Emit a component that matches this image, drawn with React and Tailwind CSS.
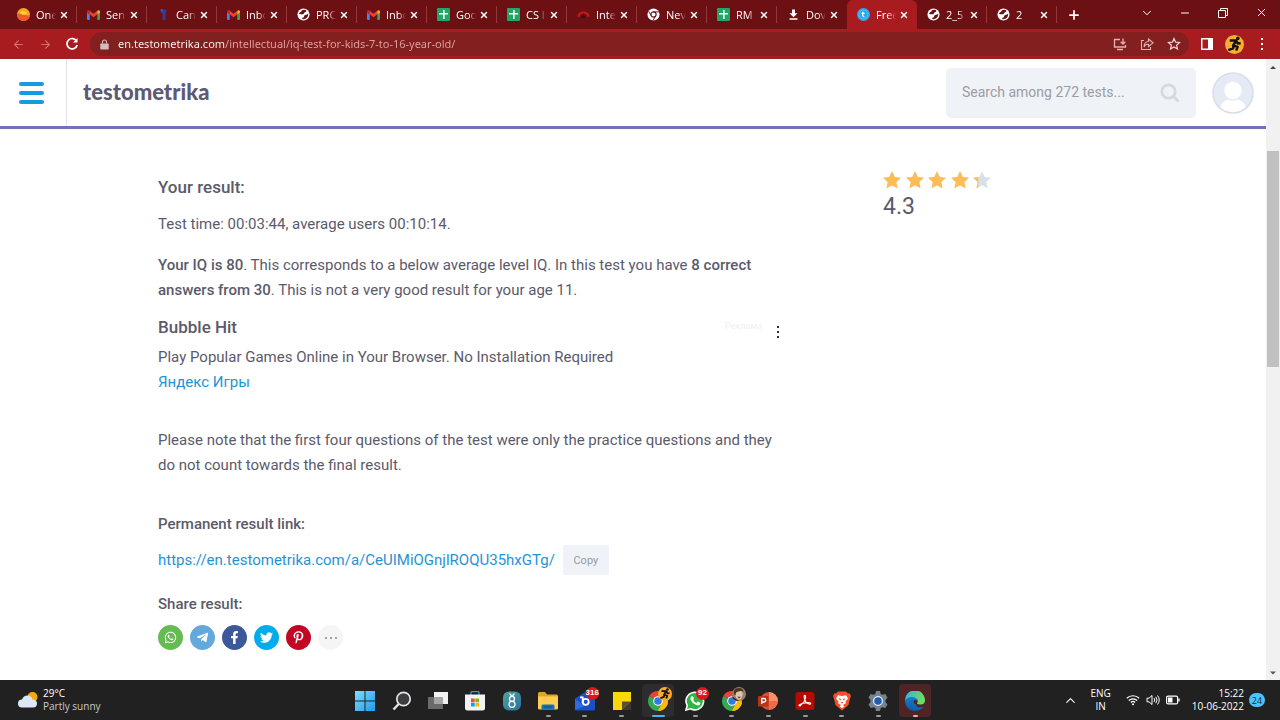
import { FaWhatsapp, FaTelegramPlane, FaFacebookF, FaTwitter, FaPinterestP } from "react-icons/fa";
import { X, Plus, ArrowLeft, ArrowRight, ChevronDown, ChevronUp, Minus } from "lucide-react";

/* ---------- tab icons ---------- */

function OneIcon() {
  return (
    <svg viewBox="0 0 14 14" className="size-[13px]">
      <circle cx="7" cy="7" r="7" fill="#f5a623" />
      <path d="M0 7a7 7 0 0 0 14 0c-2 2-4 1-6 0S2 5 0 7z" fill="#f0592a" />
      <path d="M3 5c2-2 5-2 8 0-2 3-6 3-8 0z" fill="#ffd23f" />
    </svg>
  );
}

function GmailIcon() {
  return (
    <svg viewBox="0 0 24 18" className="h-[10px] w-[13px]">
      <path d="M0 3v13.500q0 1.500 1.500 1.500H5V7z" fill="#4285f4" />
      <path d="M24 3v13.500q0 1.500-1.500 1.500H19V7z" fill="#34a853" />
      <path d="M0 3Q0 0 2.500 0 3.600 0 5 1.300L12 6.500 19 1.300V7.500L12 13 5 7.500 0 4z" fill="#ea4335" />
      <path d="M19 1.300Q20.500 0 21.500 0 24 0 24 3v1.500l-5 3.500z" fill="#fbbc04" />
      <path d="M0 3Q0 0 2.500 0 3.600 0 5 1.300V8L0 4.500z" fill="#c5221f" />
    </svg>
  );
}

function CanIcon() {
  return (
    <svg viewBox="0 0 14 14" className="size-[13px]">
      <path d="M4 2h6v2.500H9V13H6V5H4z" fill="#2e3f9e" />
      <circle cx="5" cy="2.200" r="1.200" fill="#3f63d8" />
    </svg>
  );
}

function GlobeIcon() {
  return (
    <svg viewBox="0 0 14 14" className="size-[13px]">
      <circle cx="7" cy="7" r="6.500" fill="#fff" />
      <path d="M2 6.500c2 0 3 .5 4.500.2C8 6.300 7 4.500 9 4.200c1 0 1.300-.8.800-1.800C7 1 4.500 2.500 4.800 3.500 4.500 4.500 3 4 2 6.500zM12 6c-1.500 1.700-3 1.500-4 2s.5 2-1.500 2.300c-1.200.2-1 1.200-.5 1.700C9.500 12.500 12.500 10 12 6z" fill="#6c1013" />
    </svg>
  );
}

function SheetsIcon() {
  return (
    <svg viewBox="0 0 13 13" className="size-[13px]">
      <rect width="13" height="13" rx="1" fill="#23a566" />
      <path d="M6 2h1.600v3H11v1.500H7.600V11H6V6.500H2V5h4z" fill="#fff" />
    </svg>
  );
}

function GaugeIcon() {
  return (
    <svg viewBox="0 0 14 14" className="size-[13px]">
      <path d="M1.500 9.500a5.600 5.600 0 0 1 11 0" fill="none" stroke="#c4161c" strokeWidth="2.600" />
      <path d="M5 10.500l2-5 2 5z" fill="#3a0709" />
    </svg>
  );
}

function ChromeMonoIcon() {
  return (
    <svg viewBox="0 0 14 14" className="size-[13px]">
      <circle cx="7" cy="7" r="6.500" fill="#fff" />
      <circle cx="7" cy="7" r="2.800" fill="#fff" stroke="#6c1013" strokeWidth="1.200" />
      <path d="M7 4.200h5.800M4.600 8.400L1.700 3.400M9.400 8.400L6.500 13.300" stroke="#6c1013" strokeWidth="1" />
    </svg>
  );
}

function DownloadIcon() {
  return (
    <svg viewBox="0 0 13 13" className="size-[13px]">
      <path d="M5 1.500h3v3.800h2.500L6.500 9.300 2.500 5.300H5zM2.500 10.300h8v1.500h-8z" fill="#fff" />
    </svg>
  );
}

function TestometrikaIcon() {
  return (
    <svg viewBox="0 0 14 14" className="size-[13px]">
      <circle cx="7" cy="7" r="7" fill="#2aa7ee" />
      <circle cx="7" cy="7" r="4.800" fill="none" stroke="#a9dcfa" strokeWidth=".6" strokeDasharray="2 1" />
      <path d="M6.200 4v4.200q0 1.300 1.800 1.300M5 5.800h3.200" fill="none" stroke="#fff" strokeWidth="1.300" />
    </svg>
  );
}

const tabs = [
  { icon: OneIcon, title: "One" },
  { icon: GmailIcon, title: "Sen" },
  { icon: CanIcon, title: "Can" },
  { icon: GmailIcon, title: "Inbo" },
  { icon: GlobeIcon, title: "PRC" },
  { icon: GmailIcon, title: "Inbo" },
  { icon: SheetsIcon, title: "Goo" },
  { icon: SheetsIcon, title: "CS I" },
  { icon: GaugeIcon, title: "Inte" },
  { icon: ChromeMonoIcon, title: "Nev" },
  { icon: SheetsIcon, title: "RM" },
  { icon: DownloadIcon, title: "Dov" },
  { icon: TestometrikaIcon, title: "Free", active: true },
  { icon: GlobeIcon, title: "2_5" },
  { icon: GlobeIcon, title: "2" },
];

function Tab({ icon: Icon, title, active, divider }) {
  return (
    <li
      className={
        "flex w-[70px] min-w-0 items-center border-r pl-[10px] " +
        (active ? "rounded-t-md bg-[#a81c1f] " : "") +
        (divider ? "my-[6px] border-[#94393b]" : active ? "border-transparent" : "my-[6px] border-transparent")
      }
    >
      <Icon />
      <button
        type="button"
        className="ml-[6px] w-5 overflow-hidden text-left text-[11px] leading-4 whitespace-nowrap text-white [mask-image:linear-gradient(90deg,#000_60%,transparent)]"
      >
        {title}
      </button>
      <button type="button" aria-label="Close tab" className="ml-[2px] flex size-3 items-center justify-center text-white">
        <X className="size-[10px]" strokeWidth={3.5} />
      </button>
    </li>
  );
}

function TabStrip() {
  return (
    <div className="flex h-[29px] bg-[#6c1013] pl-[7px] font-['Open_Sans','Noto_Sans',sans-serif] text-white">
      <ul className="flex min-w-0">
        {tabs.map((tab, i) => (
          <Tab key={i} {...tab} divider={!tab.active && !(tabs[i + 1] && tabs[i + 1].active)} />
        ))}
      </ul>
      <button type="button" aria-label="New tab" className="flex w-[34px] items-center justify-center">
        <Plus className="size-[14px]" strokeWidth={3} />
      </button>
      <div className="ml-auto flex items-center pb-1">
        <button type="button" aria-label="Search tabs" className="flex w-[38px] justify-center">
          <ChevronDown className="size-[14px]" strokeWidth={1.7} />
        </button>
        <button type="button" aria-label="Minimize" className="flex w-[38px] justify-center">
          <Minus className="size-3" strokeWidth={2} />
        </button>
        <button type="button" aria-label="Restore" className="flex w-[38px] justify-center">
          <svg viewBox="0 0 10 10" className="size-[10px]" fill="none" stroke="#fff">
            <path d="M.5 2.500h7v7h-7zM2.500 2.500V.5h7v7h-2" />
          </svg>
        </button>
        <button type="button" aria-label="Close" className="flex w-[38px] justify-center">
          <X className="size-[13px]" strokeWidth={1.8} />
        </button>
      </div>
    </div>
  );
}

function RunnerBadge({ className }) {
  return (
    <svg viewBox="0 0 20 20" className={className}>
      <circle cx="10" cy="10" r="10" fill="#fbae2c" />
      <circle cx="13.500" cy="3.600" r="1.900" fill="#111" />
      <path d="M5 5.800h7L8.500 11l4.800 1.500-1.500 4M9 10.800L8.500 14l-5 2M12 6.500l1.500 2.500 3-.3" fill="none" stroke="#111" strokeWidth="2.600" strokeLinejoin="round" />
    </svg>
  );
}

function Toolbar() {
  return (
    <div className="flex h-[30px] items-center bg-[#a81c1f] pr-4 pl-3">
      <button type="button" aria-label="Back" className="text-[#d3706f]">
        <ArrowLeft className="size-[13px]" strokeWidth={2} />
      </button>
      <button type="button" aria-label="Forward" className="ml-[14px] text-[#d3706f]">
        <ArrowRight className="size-[13px]" strokeWidth={2} />
      </button>
      <button type="button" aria-label="Reload" className="ml-[13px]">
        <svg viewBox="0 0 14 14" className="size-[14px]" fill="none" stroke="#fff" strokeWidth="1.700">
          <path d="M11.700 4.200A5.200 5.200 0 1 0 12.200 8" />
          <path d="M12.500 1v4.500H8z" fill="#fff" stroke="none" />
        </svg>
      </button>
      <label className="ml-[11px] flex h-6 flex-1 items-center rounded-full bg-[#831f1f] pr-[8px] pl-[10px]">
        <svg viewBox="0 0 10 12" className="h-[11px] w-[9px]">
          <path d="M1 5h8q.7 0 .7.700v5q0 .8-.7.800H1q-.7 0-.7-.8v-5Q.3 5 1 5z" fill="#d5bcbc" />
          <path d="M2.800 5V3.200a2.200 2.200 0 0 1 4.400 0V5" fill="none" stroke="#d5bcbc" strokeWidth="1.200" />
        </svg>
        <input
          type="text"
          aria-label="Address"
          defaultValue="en.testometrika.com/intellectual/iq-test-for-kids-7-to-16-year-old/"
          className="ml-[9px] min-w-0 flex-1 bg-[linear-gradient(90deg,#ffffff_107px,#e0a3a3_107px)] bg-clip-text font-['Noto_Sans',sans-serif] text-[11px] leading-4 text-transparent outline-none"
        />
        <span className="flex items-center gap-[13px]">
          <button type="button" aria-label="Install">
            <svg viewBox="0 0 14 14" className="size-[14px]" fill="none" stroke="#dfb3b3" strokeWidth="1.300">
              <path d="M7 2.500H1.500v7.500h11V8M4 12.500h6M10 1.500v5M7.700 4.700L10 7l2.300-2.300" />
            </svg>
          </button>
          <button type="button" aria-label="Share">
            <svg viewBox="0 0 14 14" className="size-[14px]" fill="none" stroke="#dfb3b3" strokeWidth="1.100">
              <path d="M4 3.500H1.500v9h9V10M8.500 2l4.500 3.800L8.500 9.500V7.300Q5.500 7 4 10 4.300 5 8.500 4.300z" />
            </svg>
          </button>
          <button type="button" aria-label="Bookmark">
            <svg viewBox="0 0 14 14" className="size-[14px]" fill="none" stroke="#f0d5d5" strokeWidth="1.200">
              <path d="M7 1.500l1.600 3.700 4 .3-3 2.700.9 3.900L7 10l-3.500 2.100.9-3.900-3-2.700 4-.3z" />
            </svg>
          </button>
        </span>
      </label>
      <button type="button" aria-label="Side panel" className="ml-[12px]">
        <svg viewBox="0 0 12 12" className="size-3">
          <path d="M0 0h12v12H0zM1.500 1.500v9H7v-9z" fill="#fff" fillRule="evenodd" />
        </svg>
      </button>
      <button type="button" aria-label="Profile" className="ml-[12px]">
        <RunnerBadge className="size-[19px]" />
      </button>
      <button type="button" aria-label="Menu" className="ml-4 flex flex-col gap-[3px] px-[1px]">
        <i className="size-[2px] bg-white" />
        <i className="size-[2px] bg-white" />
        <i className="size-[2px] bg-white" />
      </button>
    </div>
  );
}

/* ---------- site ---------- */

function SiteHeader() {
  return (
    <header className="flex h-[70px] items-center border-b-[3px] border-[#7272b3] pr-3">
      <div className="flex h-full w-[67px] items-center justify-center border-r border-[#e4e4ec] pr-1">
        <button type="button" aria-label="Menu" className="flex w-[25px] flex-col gap-[5px]">
          <i className="h-1 rounded-full bg-[#179bdc]" />
          <i className="h-1 rounded-full bg-[#179bdc]" />
          <i className="h-1 rounded-full bg-[#179bdc]" />
        </button>
      </div>
      <a href="#home" className="ml-4 pb-[2px] font-['Lato',sans-serif] text-[22px] leading-6 font-black text-[#5d5b73]">
        testometrika
      </a>
      <label className="ml-auto flex h-[50px] w-[250px] items-center rounded-[5px] bg-[#eff3f7] px-4">
        <input
          type="search"
          aria-label="Search tests"
          placeholder="Search among 272 tests..."
          className="min-w-0 flex-1 bg-transparent text-[14px] text-[#5d5b6b] outline-none placeholder:text-[#9b9ca5]"
        />
        <svg viewBox="0 0 20 20" className="size-5" fill="none" stroke="#d5dade">
          <circle cx="8.500" cy="8.500" r="6.700" strokeWidth="2.800" />
          <path d="M13.500 13.500l5 5" strokeWidth="3" />
        </svg>
      </label>
      <button type="button" aria-label="Account" className="ml-4">
        <svg viewBox="0 0 42 42" className="size-[42px]">
          <circle cx="21" cy="21" r="20" fill="#e6eaf4" />
          <path d="M8 36.500Q9.500 27 21 27t13 9.500A20 20 0 0 1 8 36.500z" fill="#fff" />
          <circle cx="21" cy="18.500" r="9.500" fill="#fff" stroke="#e6eaf4" strokeWidth="1.500" />
          <circle cx="21" cy="21" r="20" fill="none" stroke="#d9deea" strokeWidth="1.600" />
        </svg>
      </button>
    </header>
  );
}

const starPath = "M9 .3l2.700 5.700 6.200.8-4.600 4.200 1.200 6.200L9 14.200l-5.500 3L4.700 11 .1 6.800 6.300 6z";

function Rating({ value }) {
  return (
    <section aria-label="Rating" className="w-[225px] pt-[42px]">
      <div className="flex w-[108px] justify-between">
        {[0, 1, 2, 3, 4].map((i) => (
          <svg key={i} viewBox="0 0 18 18" className="size-[18px]">
            <clipPath id={"star" + i}>
              <rect width={18 * Math.min(1, Math.max(0, value - i))} height="18" />
            </clipPath>
            <path d={starPath} fill="#d9e1e8" />
            <path d={starPath} fill="#fdbc54" clipPath={"url(#star" + i + ")"} />
          </svg>
        ))}
      </div>
      <p className="mt-1 text-[23px] leading-7">{value}</p>
    </section>
  );
}

const shares = [
  { label: "WhatsApp", icon: FaWhatsapp, color: "bg-[#65bc54]" },
  { label: "Telegram", icon: FaTelegramPlane, color: "bg-[#64a9dc]" },
  { label: "Facebook", icon: FaFacebookF, color: "bg-[#3b5998]" },
  { label: "Twitter", icon: FaTwitter, color: "bg-[#00aced]" },
  { label: "Pinterest", icon: FaPinterestP, color: "bg-[#c20724]" },
];

function Result() {
  return (
    <article className="w-[625px] pt-[46px]">
      <h2 className="text-[17px] font-medium">Your result:</h2>
      <p className="mt-3">Test time: 00:03:44, average users 00:10:14.</p>
      <p className="mt-4">
        <b className="font-medium">Your IQ is 80</b>. This corresponds to a below average level IQ. In this test you have{" "}
        <b className="font-medium">8 correct answers from 30</b>. This is not a very good result for your age 11.
      </p>
      <div className="mt-3">
        <div className="flex justify-between pr-[3px]">
          <h3 className="text-[17px] font-medium">Bubble Hit</h3>
          <div className="flex items-center gap-[14px]">
            <span className="pb-1 text-[9px] leading-3 text-[#efeff2]">Реклама</span>
            <button type="button" aria-label="Ad options" className="mt-2 flex flex-col gap-[3px] px-[1px]">
              <i className="size-[2px] bg-[#333]" />
              <i className="size-[2px] bg-[#333]" />
              <i className="size-[2px] bg-[#333]" />
            </button>
          </div>
        </div>
        <p className="mt-[5px]">Play Popular Games Online in Your Browser. No Installation Required</p>
        <a href="#games" className="text-[#1e94d6]">
          Яндекс Игры
        </a>
      </div>
      <p className="mt-[33px]">
        Please note that the first four questions of the test were only the practice questions and they do not count
        towards the final result.
      </p>
      <h3 className="mt-[34px] font-medium">Permanent result link:</h3>
      <div className="mt-2 flex items-center">
        <a href="#result" className="text-[#1e94d6]">
          https://en.testometrika.com/a/CeUIMiOGnjlROQU35hxGTg/
        </a>
        <button type="button" className="ml-2 h-[30px] w-[46px] rounded-[2px] bg-[#eff3f7] text-[11px] text-[#9799a5]">
          Copy
        </button>
      </div>
      <h3 className="mt-[17px] font-medium">Share result:</h3>
      <div className="mt-2 flex gap-[7px]">
        {shares.map(({ label, icon: Icon, color }) => (
          <button
            key={label}
            type="button"
            aria-label={label}
            className={"flex size-[25px] items-center justify-center rounded-full text-white " + color}
          >
            <Icon className="size-[13px]" />
          </button>
        ))}
        <button type="button" aria-label="More" className="flex size-[25px] items-center justify-center gap-[3px] rounded-full bg-[#f5f5f5]">
          <i className="size-[2px] rounded-full bg-[#888]" />
          <i className="size-[2px] rounded-full bg-[#888]" />
          <i className="size-[2px] rounded-full bg-[#888]" />
        </button>
      </div>
    </article>
  );
}

function Scrollbar() {
  return (
    <div aria-hidden="true" className="flex w-[14px] flex-col items-center bg-[#f1f1f1]">
      <svg viewBox="0 0 14 14" className="size-[14px]">
        <path d="M4 10l3-3 3 3z" fill="#444" />
      </svg>
      <div className="mt-[78px] h-[216px] w-3 bg-[#c1c1c1]" />
      <svg viewBox="0 0 14 14" className="mt-auto size-[14px]">
        <path d="M4 5.500h6l-3 3z" fill="#555" />
      </svg>
    </div>
  );
}

/* ---------- taskbar ---------- */

function WindowsIcon() {
  return (
    <svg viewBox="0 0 20 20" className="size-5">
      <linearGradient id="win" x2="1" y2="1">
        <stop stopColor="#7fdcff" />
        <stop offset="1" stopColor="#1d9bea" />
      </linearGradient>
      <path d="M0 0h9.500v9.500H0zM10.500 0H20v9.500h-9.500zM0 10.500h9.500V20H0zM10.500 10.500H20V20h-9.500z" fill="url(#win)" />
    </svg>
  );
}

function SearchIcon() {
  return (
    <svg viewBox="0 0 20 20" className="size-5" fill="none" stroke="#e6e6e6">
      <circle cx="11.500" cy="8" r="6.700" strokeWidth="1.700" fill="#3b3f42" />
      <path d="M6.700 13L1.500 18.500" strokeWidth="2.400" />
    </svg>
  );
}

function TaskViewIcon() {
  return (
    <svg viewBox="0 0 20 20" className="size-5">
      <path d="M6 1h14v12H6z" fill="#f2f2f2" />
      <path d="M0 6h15v12H0z" fill="#6a6a6a" />
      <path d="M6 6h9v7H6z" fill="#a5a5a5" />
    </svg>
  );
}

function StoreIcon() {
  return (
    <svg viewBox="0 0 20 20" className="size-5">
      <path d="M6 4V1.500q0-.8.800-.8h6.400q.8 0 .8.800V4" fill="none" stroke="#2f9be0" strokeWidth="1.300" />
      <path d="M0 3.500h20V17q0 2.500-2.500 2.500h-15Q0 19.500 0 17z" fill="#f3f3f3" />
      <path d="M6 7.500h3.700v3.700H6z" fill="#f25022" />
      <path d="M10.300 7.500H14v3.700h-3.700z" fill="#7fba00" />
      <path d="M6 11.800h3.700v3.700H6z" fill="#00a4ef" />
      <path d="M10.300 11.800H14v3.700h-3.700z" fill="#ffb900" />
    </svg>
  );
}

function EightIcon() {
  return (
    <svg viewBox="0 0 20 20" className="size-5">
      <linearGradient id="eight" x2="1" y2="1">
        <stop stopColor="#4fa39b" />
        <stop offset="1" stopColor="#2b6f9e" />
      </linearGradient>
      <rect x="1" y=".5" width="18" height="19" rx="6" fill="url(#eight)" />
      <path d="M7.500 2.500L10 5.300l2.500-2.800" fill="none" stroke="#fff" strokeWidth="1.200" />
      <circle cx="10" cy="7.800" r="2.500" fill="none" stroke="#fff" strokeWidth="1.300" />
      <circle cx="10" cy="13.300" r="3" fill="none" stroke="#fff" strokeWidth="1.300" />
    </svg>
  );
}

function FolderIcon() {
  return (
    <svg viewBox="0 0 20 20" className="size-5">
      <path d="M0 2.500Q0 1 1.500 1H7l2 2.500h9.500q1.500 0 1.500 1.500v5H0z" fill="#e5a523" />
      <path d="M0 5.500h20V17q0 1.500-1.500 1.500h-17Q0 18.500 0 17z" fill="#fccf53" />
      <path d="M3.500 18.500V15q0-1.500 1.500-1.500h10q1.500 0 1.500 1.500v3.500z" fill="#1571b8" />
      <path d="M6 15.500h8v1H6z" fill="#0d4f86" />
    </svg>
  );
}

function MailIcon() {
  return (
    <svg viewBox="0 0 20 20" className="size-5">
      <path d="M0 7.500L10 1l10 6.500V18q0 1.500-1.500 1.500h-17Q0 19.500 0 18z" fill="#1b4fc4" />
      <path d="M0 8l10 7L0 19z" fill="#2d6be0" />
      <circle cx="10.700" cy="10.800" r="3" fill="none" stroke="#fff" strokeWidth="1.800" />
      <path d="M5 6.300h2.700V12" fill="none" stroke="#fff" strokeWidth="1.700" />
    </svg>
  );
}

function NotesIcon() {
  return (
    <svg viewBox="0 0 20 20" className="size-5">
      <path d="M1 1h18v9.500L10 19H1z" fill="#fcd80a" />
      <path d="M19 10.500L10 19v-8.500z" fill="#5c5230" />
      <path d="M19 10.500V19h-9z" fill="#3c3a35" />
    </svg>
  );
}

function ChromeIcon() {
  return (
    <svg viewBox="0 0 20 20" className="size-5">
      <path d="M10 10L1.340 5A10 10 0 0 1 18.660 5z" fill="#ea4335" />
      <path d="M10 10L18.660 5A10 10 0 0 1 10 20z" fill="#fbbc05" />
      <path d="M10 10V20A10 10 0 0 1 1.340 5z" fill="#34a853" />
      <path d="M10 5.200h8.700L14.200 12.400z" fill="#fbbc05" />
      <path d="M5.840 12.400L10 20l4.160-7.600z" fill="#34a853" />
      <path d="M14.160 12.400L10 20q8-1 10-8z" fill="#fbbc05" />
      <circle cx="10" cy="10" r="4.800" fill="#fff" />
      <circle cx="10" cy="10" r="3.800" fill="#3478e8" />
    </svg>
  );
}

function FaceBadge({ className }) {
  return (
    <svg viewBox="0 0 12 12" className={className}>
      <circle cx="6" cy="6" r="6" fill="#9b8267" />
      <path d="M3 3.500Q6 1 9 4v3q-1 4-3 4-3-1-3-4z" fill="#e0c6a4" />
      <path d="M1.500 6Q1 1 5 1q4-1 5 3Q7 3 5 4 3 4 3 7zM4.500 8.300h3.200L6 9.800z" fill="#4a3728" />
      <path d="M0 8l3 2 3 2Q1 12 0 8z" fill="#2c221b" />
    </svg>
  );
}

function WhatsAppIcon() {
  return (
    <svg viewBox="0 0 20 20" className="size-5">
      <path d="M1 19l1.200-4.500A8.800 8.800 0 1 1 5.600 17.800z" fill="#2bb741" stroke="#fff" strokeWidth="1.600" />
      <path d="M6.400 5.500q.9-1 1.700.2l.8 1.800q.1.500-.8 1.500 1.200 2.100 3.300 2.900l1-1.100q.5-.4 1 0l1.800 1q.6.500-.2 1.600-1.400 1.600-3.800.7-4-1.500-5.600-5.300-.4-2.200.8-3.300z" fill="#fff" />
    </svg>
  );
}

function PowerPointIcon() {
  return (
    <svg viewBox="0 0 20 20" className="size-5">
      <circle cx="11" cy="10" r="9" fill="#d35230" />
      <path d="M11 1a9 9 0 0 1 9 9h-9z" fill="#ff8f6b" />
      <path d="M11 10h9a9 9 0 0 1-9 9z" fill="#ed6c47" />
      <rect y="5" width="10.500" height="10.500" rx="1" fill="#b7331a" />
      <path d="M3.800 13V7.500H6a1.700 1.700 0 0 1 0 3.500H4" fill="none" stroke="#fff" strokeWidth="1.300" />
    </svg>
  );
}

function AcrobatIcon() {
  return (
    <svg viewBox="0 0 20 20" className="size-5">
      <rect x=".5" y="1" width="19" height="18" rx="2.500" fill="#b30b00" />
      <path d="M9.300 4.500q1.700-.5 1.200 2.500-.8 4-5.500 8-1.700 0-.5-1.300 4-2.500 10.500-2 1.500 1 0 1.600-4-.5-5.500-5.300-.6-2-.2-3.500z" fill="none" stroke="#fff" strokeWidth="1.100" />
    </svg>
  );
}

function BraveIcon() {
  return (
    <svg viewBox="0 0 20 20" className="size-5">
      <path d="M6 .5h8l2 2 1.500-.3L19 5l-.8 2L16.500 14 10 19.500 3.500 14 1.800 7 1 5l1.500-2.800L4 2.500z" fill="#f4502a" />
      <path d="M10 5l4-.8L16 7.500l-2.500 3 .4 1.700L10 14.500l-3.900-2.300.4-1.700L4 7.500l2-3.300zM10 13.500l2.500 1.700L10 17.300l-2.500-2.100z" fill="#fff" />
      <path d="M6.500 7.200l2.700.8-.9 1.800zM13.500 7.200l-2.700.8.900 1.800zM8.500 11.500l1.500-.8 1.500.8-1.500 1z" fill="#f4502a" />
    </svg>
  );
}

function GearIcon() {
  return (
    <svg viewBox="0 0 20 20" className="size-5">
      <path d="M8 0h4l.7 3 1.700.8L17.300 3l2.200 3.500L17.500 9v2l2 2.500L17.300 17l-2.900-.8-1.700.8-.7 3H8l-.7-3-1.700-.8-2.900.8L.5 13.500 2.500 11V9L.5 6.500 2.700 3l2.900.8 1.700-.8z" fill="#76828d" />
      <circle cx="10" cy="10" r="5" fill="#e8eef3" />
      <circle cx="10" cy="10" r="3.800" fill="#1d5fae" />
    </svg>
  );
}

function EdgeIcon() {
  return (
    <svg viewBox="0 0 20 20" className="size-5">
      <linearGradient id="edge1" x2="1" y2=".3">
        <stop stopColor="#31b0e8" />
        <stop offset="1" stopColor="#6fdc5c" />
      </linearGradient>
      <linearGradient id="edge2" x2="0" y2="1">
        <stop stopColor="#1f8fdc" />
        <stop offset="1" stopColor="#0c59a4" />
      </linearGradient>
      <path d="M20 9A10 10 0 1 0 18 16Q14 17.500 12 15.500 10 13 12 12q4 2.500 7-.5 1-1.300 1-2.500z" fill="url(#edge2)" />
      <path d="M0 9.500A10 10 0 0 1 20 9q0 4.500-4.500 4.500-4 0-3.500-1.500 1.500-1 .5-3.200Q10.500 5.500 6 6 1.500 6.500 0 9.500z" fill="url(#edge1)" />
      <path d="M8.500 9q-2 3 .5 6t9 1q-.8 1-2 2Q8 19.500 5.800 14 5 10 8.500 9z" fill="#1068b8" />
      <path d="M9.500 9q3-.5 3 1.500-1 1.500-.3 2.200-2.700 1-3.400-1.200Q8.500 10 9.500 9z" fill="#4e2427" />
    </svg>
  );
}

const apps = [
  { label: "Start", icon: WindowsIcon },
  { label: "Search", icon: SearchIcon },
  { label: "Task view", icon: TaskViewIcon },
  { label: "Microsoft Store", icon: StoreIcon },
  { label: "Eight", icon: EightIcon },
  { label: "File Explorer", icon: FolderIcon, running: true },
  { label: "Mail", icon: MailIcon, running: true, count: "316" },
  { label: "Sticky Notes", icon: NotesIcon, running: true },
  { label: "Chrome", icon: ChromeIcon, running: true, focused: true, badge: RunnerBadge },
  { label: "WhatsApp", icon: WhatsAppIcon, running: true, count: "92" },
  { label: "Chrome profile", icon: ChromeIcon, running: true, badge: FaceBadge },
  { label: "PowerPoint", icon: PowerPointIcon, running: true },
  { label: "Acrobat", icon: AcrobatIcon, running: true },
  { label: "Brave", icon: BraveIcon, running: true },
  { label: "Settings", icon: GearIcon, running: true },
  { label: "Edge", icon: EdgeIcon, running: true, alert: true },
];

function AppButton({ label, icon: Icon, running, focused, alert, count, badge: Badge }) {
  const bar = focused ? "w-[13px] bg-[#4cb5f0]" : alert ? "w-[5px] bg-[#f3a9a9]" : running ? "w-[5px] bg-[#9a9a9a]" : "w-[5px]";
  return (
    <button
      type="button"
      aria-label={label}
      className={
        "mx-auto flex h-[33px] w-8 flex-col items-center justify-end gap-1 rounded " +
        (focused ? "bg-[#2d2d2d]" : alert ? "bg-[#4e2427]" : "")
      }
    >
      <span className="relative">
        <Icon />
        {Badge && <Badge className="absolute -top-1 -right-1 size-[14px]" />}
        {count && (
          <span className="absolute -top-1 -right-1 flex h-[13px] min-w-[13px] items-center justify-center rounded-full bg-[#e8121c] font-['Liberation_Sans',sans-serif] text-[8px] leading-none font-bold text-white">
            {count}
          </span>
        )}
      </span>
      <i className={"h-[2px] rounded-full " + bar} />
    </button>
  );
}

function Taskbar() {
  return (
    <footer className="grid h-10 grid-cols-[1fr_auto_1fr] items-center bg-[#212121] font-['Open_Sans','Noto_Sans',sans-serif] text-[10px] leading-[13px] text-white">
      <button type="button" className="flex items-center gap-[5px] pl-[18px] text-left">
        <svg viewBox="0 0 20 16" className="h-4 w-5">
          <circle cx="14.500" cy="5" r="5" fill="#f8a912" />
          <path d="M4 15.500a4 4 0 0 1 0-8Q5.500 3.500 9.500 3.500q4 .3 4.800 4 4.700 0 4.700 4t-4 4z" fill="#dce8f8" />
        </svg>
        <span>
          29°C
          <br />
          <span className="text-[#c9c9c9]">Partly sunny</span>
        </span>
      </button>
      <nav className="grid w-[587px] grid-cols-16">
        {apps.map((app) => (
          <AppButton key={app.label} {...app} />
        ))}
      </nav>
      <div className="flex items-center justify-end pr-[15px]">
        <button type="button" aria-label="Hidden icons">
          <ChevronUp className="size-[15px]" strokeWidth={1.8} />
        </button>
        <button type="button" className="ml-3 text-center">
          ENG
          <br />
          IN
        </button>
        <button type="button" aria-label="Quick settings" className="ml-[15px] flex items-center gap-[6px]">
          <svg viewBox="0 0 14 12" className="h-3 w-[14px]" fill="none" stroke="#fff" strokeWidth="1.200">
            <path d="M.8 4.300a8.800 8.800 0 0 1 12.400 0M2.800 6.500a6 6 0 0 1 8.400 0M4.900 8.500a3 3 0 0 1 4.200 0" />
            <circle cx="7" cy="10.200" r="1" fill="#fff" stroke="none" />
          </svg>
          <svg viewBox="0 0 14 12" className="h-3 w-[14px]" fill="none" stroke="#fff" strokeWidth="1">
            <path d="M1 4.200h2L6 1.500v9L3 7.800H1zM8 4q1.500 2 0 4M9.800 2.800q2.500 3.200 0 6.400M11.500 1.500q3.500 4.500 0 9" />
          </svg>
          <svg viewBox="0 0 14 12" className="h-3 w-[14px]">
            <rect x=".6" y="2.100" width="11" height="7.800" rx="1.500" fill="none" stroke="#fff" strokeWidth="1.200" />
            <path d="M2 3.500h4.500v5H2zM12.300 4.500h1.300v3h-1.300z" fill="#fff" />
          </svg>
        </button>
        <button type="button" className="ml-3 text-right">
          15:22
          <br />
          10-06-2022
        </button>
        <button type="button" aria-label="24 notifications" className="ml-[5px] flex h-[14px] w-4 items-center justify-center rounded-full bg-[#4cc2ff] text-[9px] text-[#12303f]">
          24
        </button>
      </div>
    </footer>
  );
}

export default function App() {
  return (
    <div className="flex min-h-screen flex-col bg-white">
      <TabStrip />
      <Toolbar />
      <div className="flex flex-1 font-['Roboto',sans-serif]">
        <div className="min-w-0 flex-1">
          <SiteHeader />
          <main className="mx-auto flex max-w-[950px] justify-between text-[15px] leading-[25px] text-[#5b5a6b]">
            <Result />
            <Rating value={4.3} />
          </main>
        </div>
        <Scrollbar />
      </div>
      <Taskbar />
    </div>
  );
}
